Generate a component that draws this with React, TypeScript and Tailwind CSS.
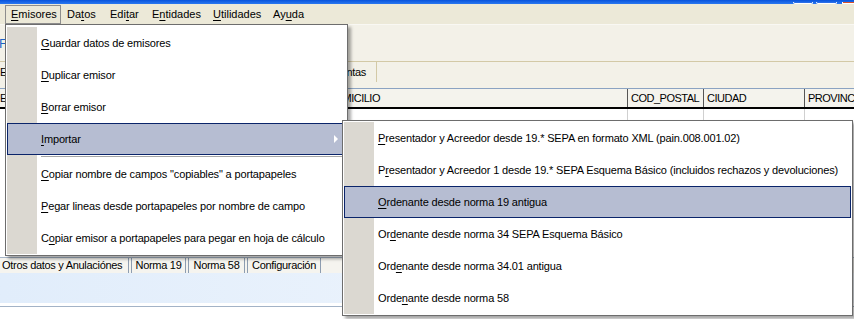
import React from 'react';

type Item = { label: string; u: number; hl?: boolean; sub?: boolean; sep?: boolean };

const MENU_BAR: { label: string; u: number; w: string; active?: boolean }[] = [
  { label: 'Emisores', u: 0, w: 'w-[56px]', active: true },
  { label: 'Datos', u: 2, w: 'w-[43px]' },
  { label: 'Editar', u: 3, w: 'w-[42px]' },
  { label: 'Entidades', u: 1, w: 'w-[61px]' },
  { label: 'Utilidades', u: 0, w: 'w-[60px]' },
  { label: 'Ayuda', u: 2, w: 'w-[50px]' },
];

const MAIN_ITEMS: Item[] = [
  { label: 'Guardar datos de emisores', u: 0 },
  { label: 'Duplicar emisor', u: 0 },
  { label: 'Borrar emisor', u: 0 },
  { label: 'Importar', u: 0, hl: true, sub: true },
  { label: '', u: -1, sep: true },
  { label: 'Copiar nombre de campos "copiables" a portapapeles', u: 0 },
  { label: 'Pegar lineas desde portapapeles por nombre de campo', u: 0 },
  { label: 'Copiar emisor a portapapeles para pegar en hoja de cálculo', u: 1 },
];

const SUB_ITEMS: Item[] = [
  { label: 'Presentador y Acreedor desde 19.* SEPA en formato XML (pain.008.001.02)', u: 0 },
  { label: 'Presentador y Acreedor 1 desde 19.* SEPA Esquema Básico (incluidos rechazos y devoluciones)', u: 1 },
  { label: 'Ordenante desde norma 19 antigua', u: 0, hl: true },
  { label: 'Ordenante desde norma 34 SEPA Esquema Básico', u: 2 },
  { label: 'Ordenante desde norma 34.01 antigua', u: 3 },
  { label: 'Ordenante desde norma 58', u: 4 },
];

// label with the access-key letter underlined
function Mn({ text, u }: { text: string; u: number }) {
  if (u < 0) return <>{text}</>;
  return (
    <span className="whitespace-nowrap">
      {text.slice(0, u)}
      <u className="decoration-1 underline-offset-[2px]">{text[u]}</u>
      {text.slice(u + 1)}
    </span>
  );
}

function MenuRow({ item }: { item: Item }) {
  if (item.sep) {
    return (
      <div className="flex h-[3px]">
        <div className="h-full w-[30px] bg-[#dbd8d1]" />
        <div className="ml-[4px] mt-px h-px flex-1 bg-[#a6a6a6]" />
      </div>
    );
  }
  return (
    <div
      className={
        item.hl
          ? 'flex h-[32px] items-center bg-[#b6bdd2] shadow-[inset_0_0_0_1px_#0a246a]'
          : 'flex h-[32px] items-center'
      }
    >
      <div className={item.hl ? 'h-full w-[30px] shrink-0' : 'h-full w-[30px] shrink-0 bg-[#dbd8d1]'} />
      <span className="whitespace-nowrap pl-[4px]">
        <Mn text={item.label} u={item.u} />
      </span>
      {item.sub && (
        <div className="ml-auto mr-[8px] h-0 w-0 border-y-[4px] border-l-[4px] border-y-transparent border-l-white" />
      )}
    </div>
  );
}

export default function App() {
  return (
    <div className="relative h-[319px] w-[854px] overflow-hidden bg-white font-['Liberation_Sans',Arial,sans-serif] text-[11px] leading-none tracking-[-0.15px] text-black">
      {/* title bar, only its lower edge shows */}
      <div className="flex h-[4px] items-end justify-end gap-[3px] overflow-hidden bg-gradient-to-b from-[#0853dc] to-[#2a78f0]">
        <div className="h-[2px] w-[20px] rounded-b-[2px] border-x border-b border-white bg-[#2a6ee8]" />
        <div className="h-[2px] w-[21px] rounded-b-[2px] border-x border-b border-white bg-[#2a6ee8]" />
        <div className="ml-[2px] h-[2px] w-[12px] border-b border-l border-white bg-[#d8502c]" />
      </div>

      {/* menu bar */}
      <div className="flex h-[20px] bg-[#ece9d8] pl-[5px] tracking-normal">
        {MENU_BAR.map(m => (
          <div
            key={m.label}
            className={
              m.active
                ? `${m.w} mt-px flex h-[19px] items-center border border-[#8d8d8d] pl-[5px]`
                : `${m.w} flex items-center pl-[6px]`
            }
          >
            <Mn text={m.label} u={m.u} />
          </div>
        ))}
      </div>
      <div className="h-px bg-[#f9f8f3]" />

      {/* toolbar area */}
      <div className="flex h-[36px] items-center bg-[#f3f1e8]">
        <span className="-ml-px text-[13px] text-[#1d64c8]">F</span>
      </div>

      {/* upper tab strip */}
      <div className="flex h-[21px] border-t border-[#d3c9a6] bg-[#f3f1e8]">
        <div className="flex w-[377px] shrink-0 items-center justify-between border-r border-[#d3c9a6] pr-[10px] tracking-[-0.3px]">
          <span>Emisores</span>
          <span>Cuentas</span>
        </div>
      </div>
      <div className="h-[6px] bg-[#f3f1e8]" />

      {/* grid header */}
      <div className="flex h-[21px] border-t border-b-2 border-t-[#8ba3c2] border-b-black bg-[#f4f3ed] tracking-[-0.5px] whitespace-nowrap">
        <div className="flex w-[323px] shrink-0 items-center">EMISOR</div>
        <div className="flex w-[304px] shrink-0 items-center pl-[4px]">DOMICILIO</div>
        <div className="flex w-[76px] shrink-0 items-center overflow-hidden border-l border-[#555] pl-[3px]">COD_POSTAL</div>
        <div className="flex w-[101px] shrink-0 items-center border-l border-[#555] pl-[3px]">CIUDAD</div>
        <div className="flex min-w-0 flex-1 items-center border-l border-[#555] pl-[3px]">PROVINCIA</div>
      </div>

      {/* grid body */}
      <div className="flex h-[148px]">
        <div className="w-[627px] shrink-0" />
        <div className="w-[76px] shrink-0 border-l border-[#d0d0d0]" />
        <div className="w-[101px] shrink-0 border-l border-[#d0d0d0]" />
        <div className="flex-1 border-l border-[#d0d0d0]" />
      </div>

      {/* lower tab strip */}
      <div className="flex h-[16px] gap-[2px] whitespace-nowrap border-t border-[#a7b6c8] bg-[#f5f4ef] tracking-[-0.3px]">
        <div className="flex w-[129px] shrink-0 items-center border-r border-[#8d9db1] pl-[2px]">Otros datos y Anulaciónes</div>
        <div className="flex w-[55px] shrink-0 items-center justify-center border-x border-[#8d9db1]">Norma 19</div>
        <div className="flex w-[57px] shrink-0 items-center justify-center border-x border-[#8d9db1]">Norma 58</div>
        <div className="flex w-[74px] shrink-0 items-center justify-center border-x border-[#8d9db1]">Configuración</div>
      </div>
      <div className="h-[30px] bg-gradient-to-r from-[#e1edfb] to-[#f4f8fd]" />
      <div className="h-[3px]" />
      <div className="h-px bg-[#a3b3c7]" />

      {/* Emisores drop-down */}
      <div className="absolute left-[5px] top-[24px] w-[343px] border border-[#6d6d6d] bg-white px-px pb-px pt-[2px] shadow-[3px_3px_3px_rgba(0,0,0,0.35)]">
        {MAIN_ITEMS.map((it, i) => (
          <MenuRow key={i} item={it} />
        ))}
      </div>

      {/* Importar submenu */}
      <div className="absolute left-[342px] top-[120px] w-[511px] border border-[#6d6d6d] bg-white p-px shadow-[3px_3px_3px_rgba(0,0,0,0.35)]">
        {SUB_ITEMS.map((it, i) => (
          <MenuRow key={i} item={it} />
        ))}
      </div>
    </div>
  );
}
